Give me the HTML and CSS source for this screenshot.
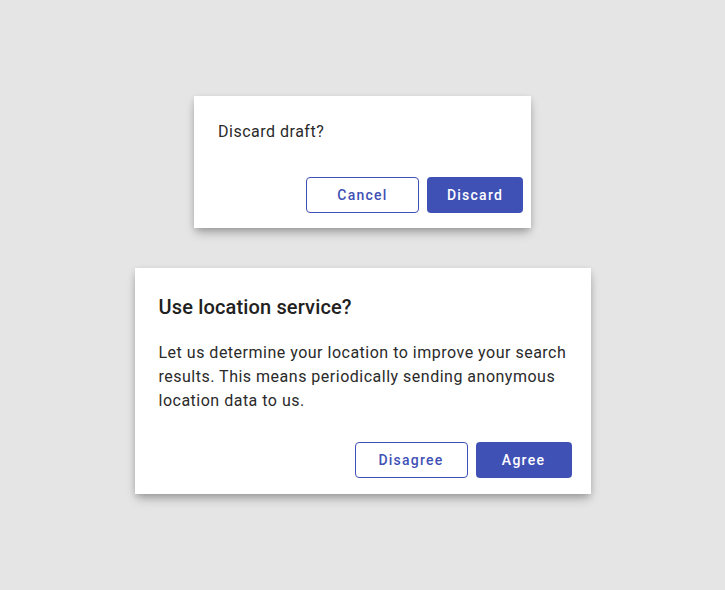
FILE: index.html
```html
<!DOCTYPE html>
<html>
<head>
<meta charset="utf-8">
<link rel="stylesheet" href="styles.css">
</head>
<body>
<main class="stage">
  <section class="dialog dialog-small">
    <div class="content">
      <p class="text">Discard draft?</p>
    </div>
    <div class="actions">
      <button class="btn btn-outline">Cancel</button>
      <button class="btn btn-filled">Discard</button>
    </div>
  </section>
  <section class="dialog dialog-large">
    <div class="content content-large">
      <h2 class="title">Use location service?</h2>
      <p class="text">Let us determine your location to improve your search results. This means periodically sending anonymous location data to us.</p>
    </div>
    <div class="actions">
      <button class="btn btn-outline">Disagree</button>
      <button class="btn btn-filled">Agree</button>
    </div>
  </section>
</main>
</body>
</html>
```
FILE: styles.css
```css
* { box-sizing: border-box; }
html, body {
  margin: 0;
  padding: 0;
  height: 100%;
}
body {
  background: #e5e5e5;
  font-family: Roboto, "Liberation Sans", sans-serif;
  -webkit-font-smoothing: antialiased;
}
.stage {
  height: 590px;
  display: flex;
  flex-direction: column;
  align-items: center;
  justify-content: center;
  gap: 40px;
}
.dialog {
  background: #fff;
  box-shadow: 0 6px 10px -2px rgba(0,0,0,0.28), 0 2px 6px rgba(0,0,0,0.12);
  display: flex;
  flex-direction: column;
}
.dialog-small {
  width: 337px;
  height: 132px;
}
.dialog-large {
  width: 456px;
  height: 226px;
}
.content {
  padding: 24px 24px 0;
  flex: 1;
}
.content-large {
  padding-top: 23px;
}
.title {
  margin: 0 0 18px;
  font-size: 20px;
  line-height: 32px;
  font-weight: 500;
  letter-spacing: 0.15px;
  color: #212121;
}
.text {
  margin: 0;
  font-size: 16px;
  line-height: 24px;
  letter-spacing: 0.5px;
  color: #2a2a2a;
}
.actions {
  display: flex;
  justify-content: flex-end;
  gap: 8px;
  padding: 0 8px 15px;
}
.dialog-large .actions {
  padding-right: 19px;
  padding-bottom: 16px;
}
.btn {
  height: 36px;
  border-radius: 4px;
  font-family: Roboto, "Liberation Sans", sans-serif;
  font-size: 14px;
  font-weight: 500;
  letter-spacing: 1.25px;
  padding: 0;
  cursor: pointer;
}
.btn-outline {
  width: 113px;
  background: #fff;
  color: #3f51b5;
  border: 1px solid #3f51b5;
}
.btn-filled {
  width: 96px;
  background: #3f51b5;
  color: #fff;
  border: none;
}
```
